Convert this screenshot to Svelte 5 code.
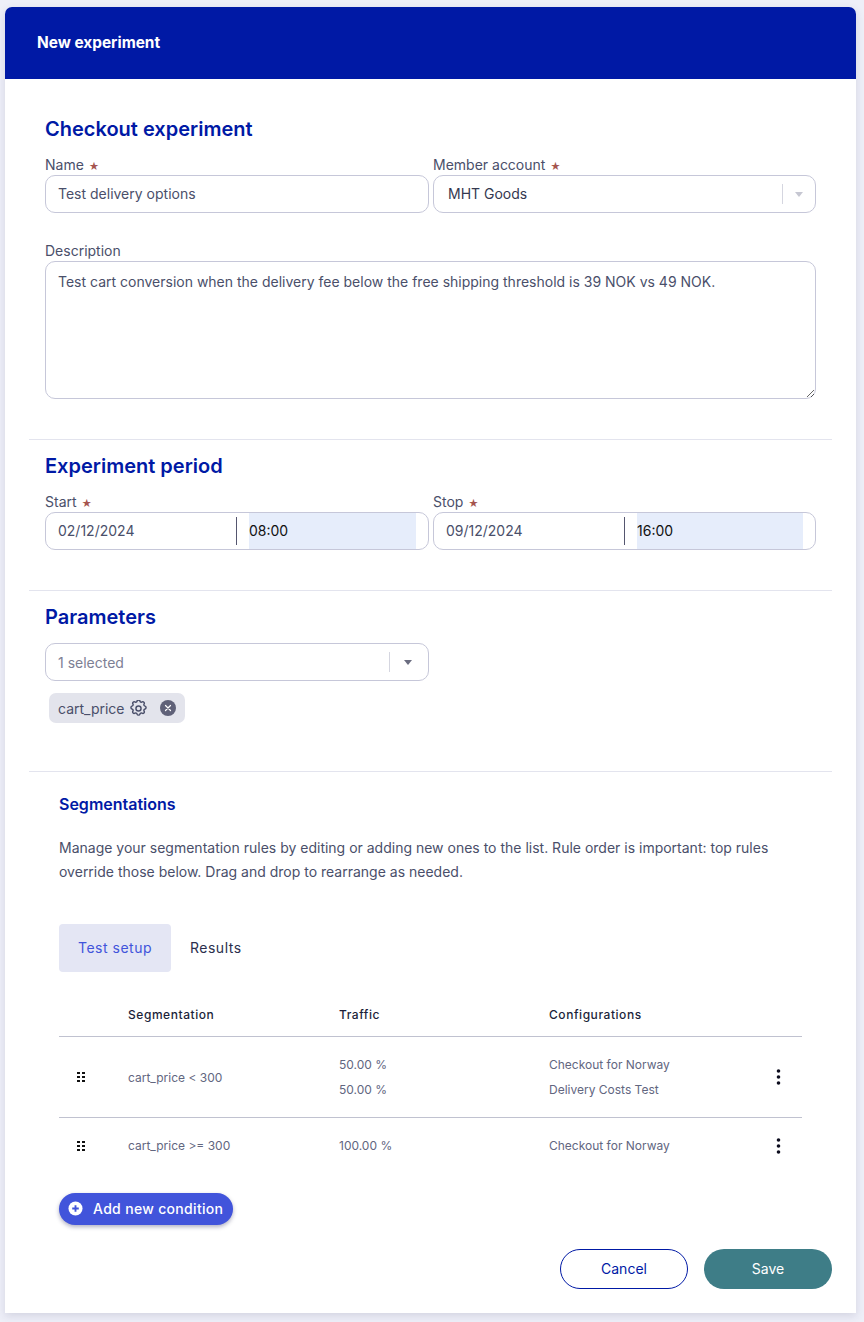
<script>
	const segments = [
		{ rule: 'cart_price < 300', traffic: ['50.00 %', '50.00 %'], configs: ['Checkout for Norway', 'Delivery Costs Test'] },
		{ rule: 'cart_price >= 300', traffic: ['100.00 %'], configs: ['Checkout for Norway'] }
	]
	const period = [
		{ label: 'Start', date: '02/12/2024', time: '08:00' },
		{ label: 'Stop', date: '09/12/2024', time: '16:00' }
	]
</script>

<main class="card">
	<header class="top">New experiment</header>

	<section class="first">
		<h2>Checkout experiment</h2>
		<div class="two">
			<div class="field">
				<span class="label">Name <i class="star">★</i></span>
				<div class="box"><span class="val">Test delivery options</span></div>
			</div>
			<div class="field">
				<span class="label">Member account <i class="star">★</i></span>
				<div class="box select dark">
					<span class="val">MHT Goods</span>
					<span class="sep"></span>
					<span class="caret light"></span>
				</div>
			</div>
		</div>
		<div class="field desc">
			<span class="label">Description</span>
			<div class="area">Test cart conversion when the delivery fee below the free shipping threshold is 39 NOK vs 49 NOK.</div>
		</div>
	</section>

	<section class="period">
		<h2>Experiment period</h2>
		<div class="two">
			{#each period as p}
				<div class="field">
					<span class="label">{p.label} <i class="star">★</i></span>
					<div class="box dates">
						<span class="date">{p.date}</span>
						<span class="time">{p.time}</span>
					</div>
				</div>
			{/each}
		</div>
	</section>

	<section class="params">
		<h2>Parameters</h2>
		<div class="two">
			<div class="box select multi">
				<span class="val muted">1 selected</span>
				<span class="sep"></span>
				<span class="caret"></span>
			</div>
		</div>
		<div class="chip">
			<span>cart_price</span>
			<svg class="gear" viewBox="2 2 20 20" fill="none" stroke="#4a4f6a" stroke-width="1.7" stroke-linecap="round" stroke-linejoin="round">
				<path d="M10.3 3.2c.4-1.6 2.9-1.6 3.4 0a1.7 1.7 0 0 0 2.6 1.1c1.4-.9 3.2.8 2.3 2.3a1.7 1.7 0 0 0 1.1 2.6c1.6.4 1.6 2.9 0 3.4a1.7 1.7 0 0 0-1.1 2.6c.9 1.4-.8 3.2-2.3 2.3a1.7 1.7 0 0 0-2.6 1.1c-.4 1.6-2.9 1.6-3.4 0a1.7 1.7 0 0 0-2.6-1.1c-1.4.9-3.2-.8-2.3-2.3a1.7 1.7 0 0 0-1.1-2.6c-1.6-.4-1.6-2.9 0-3.4a1.7 1.7 0 0 0 1.1-2.6c-.9-1.4.8-3.2 2.3-2.3a1.7 1.7 0 0 0 2.6-1.1z" />
				<circle cx="12" cy="12" r="3" />
			</svg>
			<svg class="remove" viewBox="0 0 16 16">
				<circle cx="8" cy="8" r="8" fill="#5f6178" />
				<path d="M5.5 5.5l5 5M10.5 5.5l-5 5" stroke="#fff" stroke-width="1.2" stroke-linecap="round" />
			</svg>
		</div>
	</section>

	<section class="seg">
		<h3>Segmentations</h3>
		<p>Manage your segmentation rules by editing or adding new ones to the list. Rule order is important: top rules override those below. Drag and drop to rearrange as needed.</p>

		<div class="tabs">
			<span class="tab active">Test setup</span>
			<span class="tab">Results</span>
		</div>

		<table>
			<thead>
				<tr>
					<th class="c-drag"></th>
					<th class="c-rule">Segmentation</th>
					<th class="c-traffic">Traffic</th>
					<th>Configurations</th>
					<th class="c-menu"></th>
				</tr>
			</thead>
			<tbody>
				{#each segments as s}
					<tr>
						<td>
							<svg class="drag" viewBox="0 0 8 10" fill="#111">
								{#each [1, 5, 9] as y}
									<rect x="0" y={y - 1} width="3" height="2" />
									<rect x="5" y={y - 1} width="3" height="2" />
								{/each}
							</svg>
						</td>
						<td>{s.rule}</td>
						<td>{#each s.traffic as t}<div class="line">{t}</div>{/each}</td>
						<td>{#each s.configs as c}<div class="line">{c}</div>{/each}</td>
						<td>
							<svg class="dots" viewBox="0 0 4 16" fill="#0c0c1e">
								<circle cx="2" cy="2" r="1.8" />
								<circle cx="2" cy="8" r="1.8" />
								<circle cx="2" cy="14" r="1.8" />
							</svg>
						</td>
					</tr>
				{/each}
			</tbody>
		</table>

		<button class="add">
			<svg viewBox="0 0 16 16">
				<circle cx="8" cy="8" r="7.5" fill="#fff" />
				<path d="M8 4.5v7M4.5 8h7" stroke="#4154db" stroke-width="2" />
			</svg>
			Add new condition
		</button>
	</section>

	<footer>
		<button class="btn cancel">Cancel</button>
		<button class="btn save">Save</button>
	</footer>
</main>

<style>
	:global(body) {
		background: #eeeff8;
		font-family: Inter, "Liberation Sans", sans-serif;
	}

	.card {
		margin: 7px 8px 9px 5px;
		height: 1306px;
		box-sizing: border-box;
		background: #fff;
		border-radius: 7px 7px 0 0;
		box-shadow: 0 3px 8px rgba(60, 60, 100, 0.15);
		color: #4a4f6a;
	}

	.top {
		height: 72px;
		line-height: 72px;
		padding-left: 32px;
		background: #0019a5;
		border-radius: 7px 7px 0 0;
		color: #fff;
		font-size: 15.4px;
		font-weight: 700;
	}

	section {
		margin: 0 24px;
		padding: 0 16px;
		border-bottom: 1px solid #e3e4ee;
	}

	h2 {
		margin: 0;
		font-size: 20px;
		line-height: 24px;
		font-weight: 600;
		color: #0019a5;
	}

	.first { padding-top: 38px; height: 361px; box-sizing: border-box; }
	.period { padding-top: 14px; height: 151px; box-sizing: border-box; }
	.params { padding-top: 14px; height: 181px; box-sizing: border-box; }

	.two {
		display: grid;
		grid-template-columns: 384px 383px;
		gap: 4px;
	}

	.first .two, .period .two { margin-top: 15px; }
	.params .two { margin-top: 14px; }

	.label {
		display: block;
		font-size: 14px;
		line-height: 17px;
		height: 19px;
		color: #4a4f6a;
	}

	.star {
		font-style: normal;
		font-size: 10px;
		margin-left: 1px;
		color: #a5544e;
	}

	.box {
		display: flex;
		align-items: center;
		box-sizing: border-box;
		height: 38px;
		padding: 0 12px;
		border: 1px solid #c6c7d9;
		border-radius: 10px;
		font-size: 14px;
		background: #fff;
	}

	.first .val { margin-bottom: 2px; }

	.val { flex: 1; }
	.muted { color: #7d8094; }
	.dark { padding-left: 14px; color: #343850; }

	.sep {
		width: 1px;
		height: 20px;
		background: #d5d6e0;
	}

	.caret {
		width: 0;
		height: 0;
		margin: 0 0 0 12px;
		border-left: 4px solid transparent;
		border-right: 4px solid transparent;
		border-top: 5px solid #6b6d80;
	}

	.caret.light { border-top-color: #c6c7d2; }
	.multi { padding-right: 9px; }
	.multi .caret { margin: 0 7px 0 14px; }

	.desc { margin-top: 29px; }

	.area {
		box-sizing: border-box;
		width: 771px;
		height: 138px;
		padding: 11px 12px;
		border: 1px solid #c6c7d9;
		border-radius: 10px;
		font-size: 14px;
		line-height: 18px;
		overflow: auto;
		resize: both;
	}

	.dates { padding: 0 0 0 12px; align-items: stretch; }

	.date {
		width: 178px;
		align-self: center;
		line-height: 28px;
		border-right: 1px solid #55566f;
		margin-right: 12px;
	}

	.time {
		flex: 1;
		margin-right: 12px;
		line-height: 36px;
		padding-left: 0;
		background: #e6edfb;
		color: #111;
	}

	.chip {
		display: inline-flex;
		align-items: center;
		box-sizing: border-box;
		height: 30px;
		margin: 12px 0 0 4px;
		padding: 0 9px;
		background: #e3e4ec;
		border-radius: 7px;
		font-size: 14px;
		color: #4a4f6a;
	}

	.gear { width: 17px; height: 17px; margin-left: 5px; }
	.remove { width: 16px; height: 16px; margin-left: 13px; }

	.seg {
		margin: 0;
		padding: 23px 30px 0 54px;
		border: 0;
	}

	h3 {
		margin: 0;
		font-size: 16px;
		line-height: 18px;
		font-weight: 600;
		color: #0019a5;
	}

	p {
		margin: 23px 0 0;
		font-size: 14px;
		line-height: 24px;
		color: #4a4f6a;
	}

	.tabs { display: flex; margin-top: 40px; }

	.tab {
		box-sizing: border-box;
		height: 48px;
		padding: 0 19px;
		line-height: 48px;
		font-size: 14px;
		letter-spacing: 0.5px;
		font-weight: 400;
		color: #2b2f4d;
		border-radius: 4px;
	}

	.tab.active { width: 112px; background: #e4e6f4; color: #4154db; padding: 0; text-align: center; }

	table {
		width: 743px;
		margin-top: 20px;
		border-collapse: collapse;
		table-layout: fixed;
		font-size: 12px;
		color: #62667f;
	}

	th {
		height: 44px;
		padding: 0;
		text-align: left;
		font-weight: 500;
		letter-spacing: 0.55px;
		color: #1c1f3a;
		border-bottom: 1px solid #c0c2d0;
	}

	.c-drag { width: 69px; }
	.c-rule { width: 211px; }
	.c-traffic { width: 210px; }
	.c-menu { width: 46px; }

	td { padding: 0; height: 55px; }
	tbody tr:first-child td { height: 80px; border-bottom: 1px solid #c0c2d0; }

	.line { line-height: 25px; }

	.drag { display: block; width: 8px; height: 10px; margin-left: 18px; }
	.dots { display: block; width: 5px; height: 16px; margin-left: 20px; }

	.add {
		display: flex;
		align-items: center;
		gap: 10px;
		box-sizing: border-box;
		width: 174px;
		height: 32px;
		margin-top: 20px;
		padding: 0 0 2px 9px;
		border: 0;
		border-radius: 16px;
		background: #4154db;
		box-shadow: 0 2px 4px rgba(30, 30, 80, 0.35);
		color: #fff;
		font-family: inherit;
		font-size: 14px;
		font-weight: 500;
		letter-spacing: 0.32px;
	}

	.add svg { width: 15px; height: 15px; }

	footer {
		display: flex;
		justify-content: flex-end;
		gap: 16px;
		margin: 24px 24px 0 0;
	}

	.btn {
		width: 128px;
		height: 40px;
		padding: 0 0 2px;
		border-radius: 20px;
		font-family: inherit;
		font-size: 14px;
		font-weight: 400;
	}

	.cancel { background: #fff; border: 1px solid #0019a5; color: #0019a5; }
	.save { background: #3e7d87; border: 0; color: #fff; }
</style>
